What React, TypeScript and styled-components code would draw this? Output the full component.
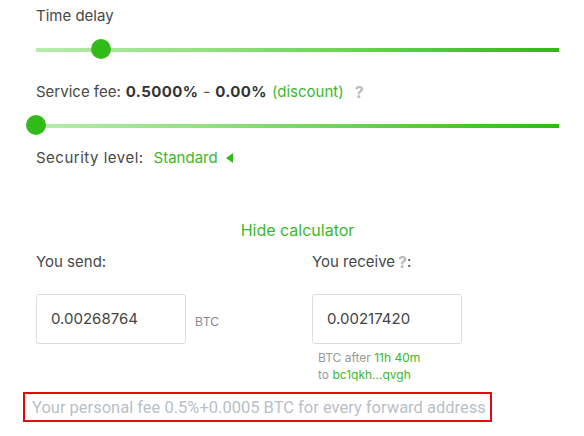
import styled, { createGlobalStyle } from 'styled-components';

const GlobalStyle = createGlobalStyle`
  body {
    margin: 0;
    background: #fff;
    font-family: Inter, "Open Sans", sans-serif;
    color: #444;
  }
`;

const Page = styled.div`
  width: 523px;
  padding: 6px 25px 0 36px;
  display: flex;
  flex-direction: column;
`;

const Label = styled.div<{ $gap?: number; $spread?: boolean }>`
  font-size: 15px;
  line-height: 20px;
  color: #484848;
  margin-top: ${(p) => p.$gap ?? 0}px;
  letter-spacing: ${(p) => (p.$spread ? '0.5px' : 'normal')};
  display: flex;
  align-items: center;
`;

const Bold = styled.b`
  font-weight: 700;
  color: #333;
  letter-spacing: 0.4px;
  margin: 0 5px;
`;

const Green = styled.span`
  color: #3cb82a;
  letter-spacing: normal;
`;

const Help = styled.span<{ $near?: boolean }>`
  color: #bcbcbc;
  font-weight: 700;
  font-size: 16px;
  margin-left: ${(p) => (p.$near ? 3 : 11)}px;
`;

const Slider = styled.div`
  position: relative;
  height: 20px;
  margin-top: 13px;
`;

const Track = styled.div`
  position: absolute;
  left: 0;
  right: 0;
  top: 9px;
  height: 4px;
  background: linear-gradient(90deg, #b6edaa 0%, #8fdf7c 35%, #5ccd45 70%, #30b914 100%);
`;

const Thumb = styled.div`
  position: absolute;
  top: 0;
  width: 20px;
  height: 20px;
  margin-left: -10px;
  border-radius: 50%;
  background: #32bb18;
`;

const Level = styled(Green)`
  margin-left: 10px;
`;

const Arrow = styled.span`
  width: 0;
  height: 0;
  border-top: 5px solid transparent;
  border-bottom: 5px solid transparent;
  border-right: 7px solid #32bb18;
  margin-left: 8px;
`;

const Toggle = styled.div`
  margin-top: 52px;
  text-align: center;
  font-size: 16px;
  line-height: 20px;
  color: #3cb82a;
`;

const Calc = styled.div`
  display: grid;
  grid-template-columns: 276px 1fr;
  margin-top: 12px;
`;

const Column = styled.div`
  display: flex;
  flex-direction: column;
`;

const Field = styled.div`
  display: flex;
  align-items: center;
  margin-top: 22px;
`;

const Input = styled.div`
  width: 150px;
  height: 50px;
  box-sizing: border-box;
  border: 1px solid #dcdcdc;
  border-radius: 3px;
  padding-left: 14px;
  display: flex;
  align-items: center;
  font-size: 15px;
  color: #444;
  padding-bottom: 2px;
`;

const Unit = styled.span`
  font-family: "Liberation Sans", Arial, sans-serif;
  font-size: 12px;
  color: #8a8a8a;
  margin-left: 9px;
  padding-top: 6px;
`;

const Hint = styled.div`
  margin-top: 5px;
  padding-left: 6px;
  font-size: 12px;
  line-height: 17px;
  color: #999;
`;

const Notice = styled.div`
  margin: 9px 0 0 -13px;
  width: 469px;
  height: 30px;
  box-sizing: border-box;
  border: 2px solid #e3090f;
  padding-left: 7px;
  display: flex;
  align-items: center;
  font-family: Roboto, sans-serif;
  font-size: 16.5px;
  color: #b8c0c8;
  white-space: nowrap;
`;

export default function App() {
  return (
    <>
      <GlobalStyle />
      <Page>
        <Label>Time delay</Label>
        <Slider>
          <Track />
          <Thumb style={{ left: 65 }} />
        </Slider>

        <Label $gap={23}>
          Service fee:<Bold>0.5000%</Bold>-<Bold>0.00%</Bold>
          <Green>(discount)</Green>
          <Help>?</Help>
        </Label>
        <Slider>
          <Track />
          <Thumb style={{ left: 0 }} />
        </Slider>

        <Label $gap={13} $spread>
          Security level:<Level>Standard</Level>
          <Arrow />
        </Label>

        <Toggle>Hide calculator</Toggle>

        <Calc>
          <Column>
            <Label>You send:</Label>
            <Field>
              <Input>0.00268764</Input>
              <Unit>BTC</Unit>
            </Field>
          </Column>
          <Column>
            <Label>
              You receive<Help $near>?</Help>:
            </Label>
            <Field>
              <Input>0.00217420</Input>
            </Field>
            <Hint>
              BTC after <Green>11h 40m</Green>
              <br />
              to <Green>bc1qkh...qvgh</Green>
            </Hint>
          </Column>
        </Calc>

        <Notice>Your personal fee 0.5%+0.0005 BTC for every forward address</Notice>
      </Page>
    </>
  );
}
